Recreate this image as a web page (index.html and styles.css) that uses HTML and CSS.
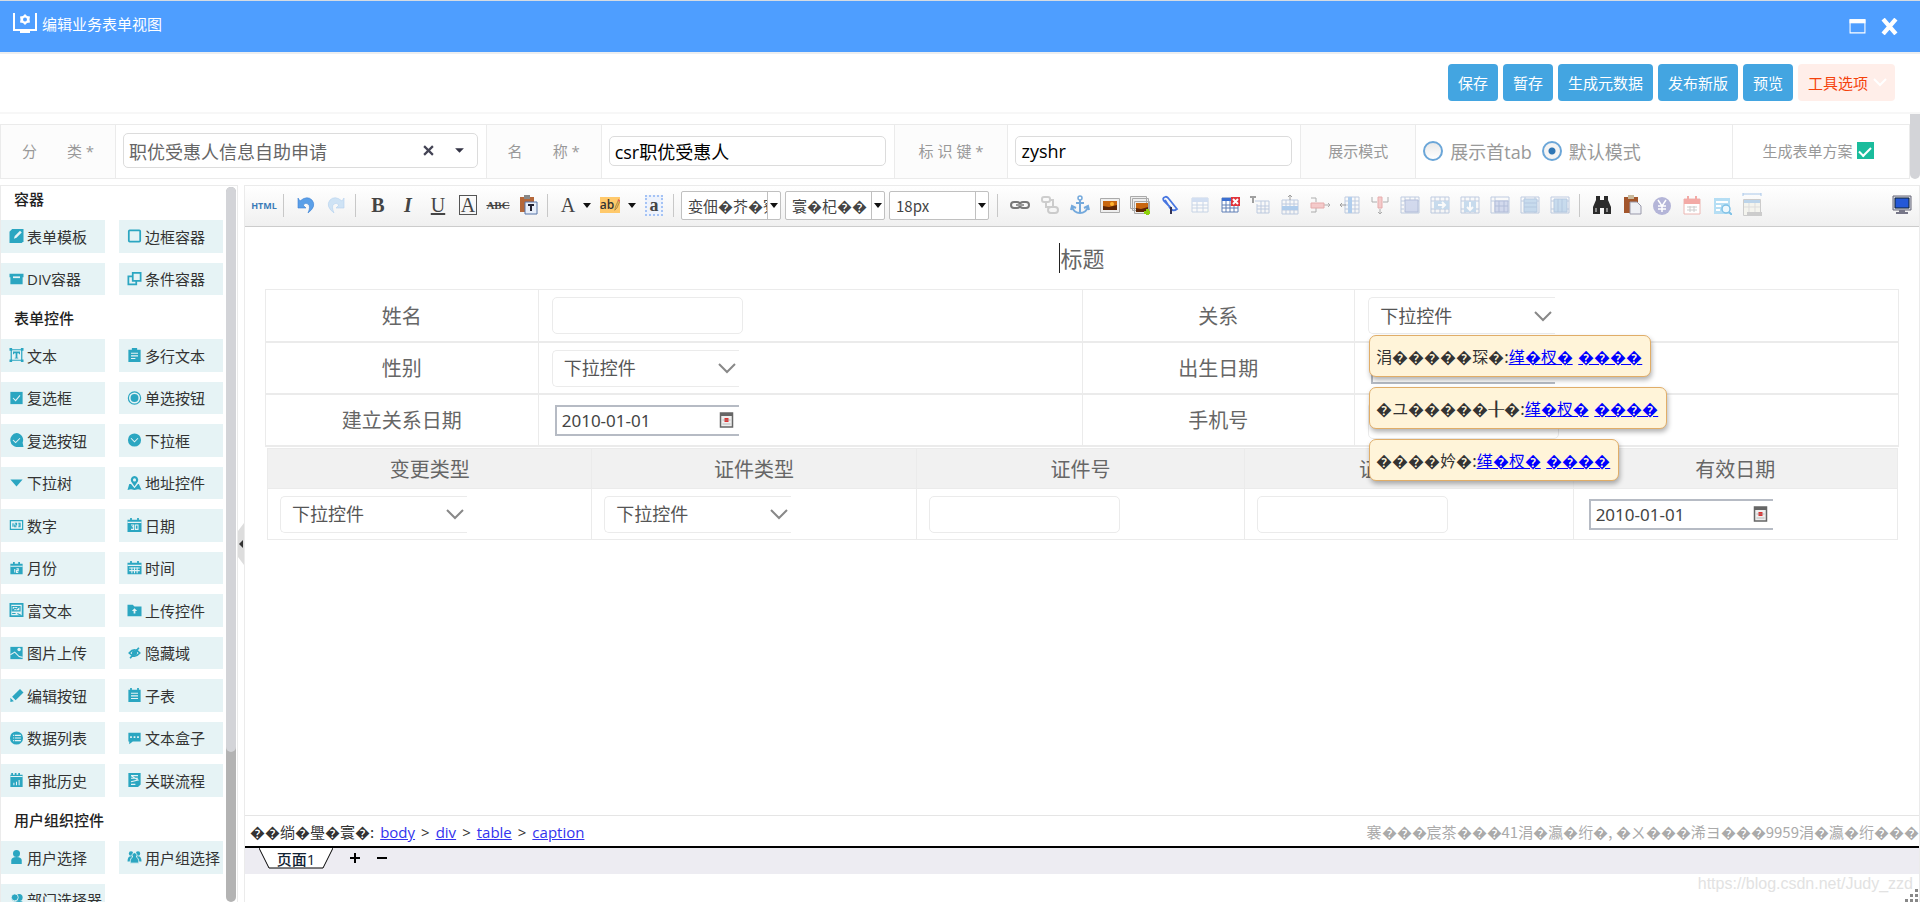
FILE: index.html
```html
<!DOCTYPE html>
<html lang="zh-CN">
<head>
<meta charset="utf-8">
<title>编辑业务表单视图</title>
<link rel="stylesheet" href="styles.css">
</head>
<body>
<header class="titlebar">
  <svg class="titlebar-icon" viewBox="0 0 26 22"><path d="M2 1v17h22V1" fill="none" stroke="#fff" stroke-width="2"/><path d="M8 19h10v2H8z" fill="#fff"/><path d="M13 2l2 2 3 .5-.5 3 .5 3-3 .5-2 2-2-2-3-.5.500-3-.5-3 3-.5z" fill="#fff"/><circle cx="13" cy="7.500" r="2" fill="#4e9eff"/></svg>
  <h1 class="titlebar-text">编辑业务表单视图</h1>
  <div class="window-buttons">
    <button class="window-button" aria-label="最大化"><svg viewBox="0 0 16 16"><path d="M1 2h14v12H1z" fill="none" stroke="#fff"/><path d="M.5 1h15v4H.5z" fill="#fff"/></svg></button>
    <button class="window-button" aria-label="关闭"><svg viewBox="0 0 16 16"><path d="M2 1l12 14M14 1L2 15" stroke="#fff" stroke-width="4"/></svg></button>
  </div>
</header>

<div class="actions">
  <button class="action">保存</button>
  <button class="action">暂存</button>
  <button class="action">生成元数据</button>
  <button class="action">发布新版</button>
  <button class="action">预览</button>
  <button class="action action-tools">工具选项 <svg viewBox="0 0 14 14"><path d="M1 4l6 6 6-6" fill="none" stroke="#fff" stroke-width="2"/></svg></button>
</div>

<section class="params">
  <div class="params-grid">
    <label class="param-label param-spread" for="category"><span>分</span><span>类 *</span></label>
    <div class="param-field">
      <div class="combo">
        <input id="category" class="combo-input" type="text" value="职优受惠人信息自助申请">
        <button class="combo-button" aria-label="清除"><svg viewBox="0 0 10 10"><path d="M1 1l8 8M9 1L1 9" stroke="#445" stroke-width="2"/></svg></button>
        <button class="combo-button" aria-label="展开"><svg viewBox="0 0 10 10"><path d="M1 3h8L5 7z" fill="#334"/></svg></button>
      </div>
    </div>
    <label class="param-label param-spread" for="name"><span>名</span><span>称 *</span></label>
    <div class="param-field"><input id="name" class="param-input" type="text" value="csr职优受惠人"></div>
    <label class="param-label param-key" for="key"><span>标</span><span>识</span><span>键 *</span></label>
    <div class="param-field"><input id="key" class="param-input" type="text" value="zyshr"></div>
    <div class="param-label">展示模式</div>
    <div class="param-field radios">
      <label class="radio-label"><input class="radio" type="radio" name="mode">展示首tab</label>
      <label class="radio-label"><input class="radio" type="radio" name="mode" checked>默认模式</label>
    </div>
    <label class="param-label param-check">生成表单方案<input class="check" type="checkbox" checked></label>
  </div>
  <div class="page-scroll"></div>
</section>

<main class="workspace">
  <aside class="sidebar">
    <div class="palette">
      <h2 class="palette-title">容器</h2>
      <div class="palette-grid">
        <button class="item"><svg viewBox="0 0 16 16"><path d="M3 0h13v14l-2 2H0V3z"/><path class="cut" d="M5 11l1-3 6-6 2 2-6 6z"/></svg>表单模板</button>
        <button class="item"><svg viewBox="0 0 16 16"><rect class="line" x="1.500" y="1.500" width="13" height="13" rx="1"/></svg>边框容器</button>
        <button class="item"><svg viewBox="0 0 16 16"><path d="M0 2h16v4H0zM1 6h14v8H1z"/><path class="cut" d="M4 5h8v2H4z"/></svg>DIV容器</button>
        <button class="item"><svg viewBox="0 0 16 16"><path class="line" d="M6 1h9v9H6zM5 5H1v9h9v-3"/></svg>条件容器</button>
      </div>
      <h2 class="palette-title">表单控件</h2>
      <div class="palette-grid">
        <button class="item"><svg viewBox="0 0 16 16"><path class="thin" d="M2 2h12v12H2z"/><path d="M0 0h3v3H0zM13 0h3v3h-3zM0 13h3v3H0zM13 13h3v3h-3zM4 4h8v3h-1l-.5-1H9v5h1v1H6v-1h1V6H5.500L5 7H4z"/></svg>文本</button>
        <button class="item"><svg viewBox="0 0 16 16"><path d="M1 2h4V0h6v2h4v14H1z"/><path class="cutline" d="M4 6h8M4 9h8M4 12h5"/></svg>多行文本</button>
        <button class="item"><svg viewBox="0 0 16 16"><path d="M1 1h14v14H1z"/><path class="cutline" d="M4 8l3 3 5-6"/></svg>复选框</button>
        <button class="item"><svg viewBox="0 0 16 16"><circle class="thin" cx="8" cy="8" r="7"/><circle cx="8" cy="8" r="4.500"/></svg>单选按钮</button>
        <button class="item"><svg viewBox="0 0 16 16"><path d="M8 0a8 8 0 0 1 7 11l1 5h-6A8 8 0 1 1 8 0z"/><path class="cutline" d="M4 8l3 3 5-5"/></svg>复选按钮</button>
        <button class="item"><svg viewBox="0 0 16 16"><circle cx="8" cy="8" r="7.500"/><path class="cutline" d="M4 6l4 4 4-4"/></svg>下拉框</button>
        <button class="item"><svg viewBox="0 0 16 16"><path d="M1 4h14l-7 8z"/></svg>下拉树</button>
        <button class="item"><svg viewBox="0 0 16 16"><path d="M8 0a4.500 4.500 0 0 1 4 6L8 12 4 6a4.500 4.500 0 0 1 4-6zM2 9h2l4 5 4-5h1l3 7-4-1-4 1-4-1-4 1z"/><circle class="cut" cx="8" cy="4.500" r="1.800"/></svg>地址控件</button>
        <button class="item"><svg viewBox="0 0 16 16"><path class="thin" d="M1 3h14v10H1zM4 6v4M6 6h2v2H6v2h2M10 6h2v4h-2M10 8h2"/></svg>数字</button>
        <button class="item"><svg viewBox="0 0 16 16"><path d="M0 2h3V0h2v2h6V0h2v2h3v14H0z"/><path class="cutline" d="M0 5h16M4 8h3v5H4M5 10h2M9 8h3v5H9z"/></svg>日期</button>
        <button class="item"><svg viewBox="0 0 16 16"><path d="M1 3h3V1h2v2h4V1h2v2h3v12H1z"/><path class="cutline" d="M1 6h14M6 9v4M8 9h2v2H8v2h2"/></svg>月份</button>
        <button class="item"><svg viewBox="0 0 16 16"><path d="M0 2h3V0h2v2h6V0h2v2h3v13H0z"/><path class="cutline" d="M0 5h16M2 8h12M2 11h12M5 7v7M8 7v7M11 7v7"/></svg>时间</button>
        <button class="item"><svg viewBox="0 0 16 16"><path class="line" d="M1 1h14v14H1z"/><path class="thin" d="M3 8V4h9v5H3zM4 8l2-2 2 1 3-3M3 12h4M9 12l4 2"/></svg>富文本</button>
        <button class="item"><svg viewBox="0 0 16 16"><path d="M0 2h6l2 2h8v11H0z"/><path class="cut" d="M8 6l3 3H9v3H7V9H5z"/></svg>上传控件</button>
        <button class="item"><svg viewBox="0 0 16 16"><path d="M1 1h14v14H1z"/><path class="cutline" d="M1 10l5-3 5 5 4 1"/><circle class="cut" cx="11" cy="4" r="2"/></svg>图片上传</button>
        <button class="item"><svg viewBox="0 0 16 16"><path class="line" d="M2 8q6-7 12 0-6 7-12 0zM3 14L13 2"/><circle cx="8" cy="8" r="3"/></svg>隐藏域</button>
        <button class="item"><svg viewBox="0 0 16 16"><path d="M12 1l4 4-9 9-4-4zM1 11l4 4-4 1z"/></svg>编辑按钮</button>
        <button class="item"><svg viewBox="0 0 16 16"><path d="M1 2h2V0h2v2h6V0h2v2h2v14H1z"/><path class="cutline" d="M4 6h8M4 9h8M4 12h8"/></svg>子表</button>
        <button class="item"><svg viewBox="0 0 16 16"><circle cx="8" cy="8" r="7.500"/><path class="cutline" d="M4 5h1M6 5h7M4 8h1M6 8h7M4 11h1M6 11h7"/></svg>数据列表</button>
        <button class="item"><svg viewBox="0 0 16 16"><path d="M1 2h14v10H6l-4 3v-3H1z"/><path class="cut" d="M3 6h2v2H3zM7 6h2v2H7zM11 6h2v2h-2z"/></svg>文本盒子</button>
        <button class="item"><svg viewBox="0 0 16 16"><path d="M1 2h1V0h2v2h2V0h2v2h2V0h2v2h3v14H1z"/><path class="cutline" d="M1 4h14M5 14v-3M8 14v-4M11 14V8"/></svg>审批历史</button>
        <button class="item"><svg viewBox="0 0 16 16"><path d="M1 0h14v13l-3 3H1z"/><path class="cutline" d="M4 3h8M4 6h8M4 3l8 5-8 2M4 13h5"/></svg>关联流程</button>
      </div>
      <h2 class="palette-title">用户组织控件</h2>
      <div class="palette-grid">
        <button class="item"><svg viewBox="0 0 16 16"><circle cx="8" cy="4" r="4"/><path d="M2 16v-4q0-4 6-4t6 4v4z"/></svg>用户选择</button>
        <button class="item"><svg viewBox="0 0 16 16"><circle cx="4" cy="4" r="2.500"/><circle cx="12" cy="4" r="2.500"/><path d="M0 13q0-6 4-6h8q4 0 4 6z"/><path class="halo" d="M8 3a3 3 0 0 1 2 5q3 1 3 7H3q0-6 3-7a3 3 0 0 1 2-5z"/></svg>用户组选择</button>
        <button class="item"><svg viewBox="0 0 16 16"><circle cx="11" cy="5" r="4"/><path d="M5 14q0-5 6-5t5 5z"/><circle class="halo" cx="6" cy="5" r="4"/><path d="M0 16q0-6 6-6t6 6z"/></svg>部门选择器</button>
      </div>
    </div>
    <div class="palette-scroll"><div class="palette-thumb"></div></div>
  </aside>
  <button class="collapse" aria-label="收起"><svg viewBox="0 0 6 42"><path d="M6 0v42L0 34V8z" fill="#ddd"/><path d="M5 17v8l-4-4z" fill="#333"/></svg></button>

  <section class="editor">
    <div class="tools">
      <button class="tool tool-html">HTML</button>
      <i class="tool-sep"></i>
      <button class="tool" aria-label="撤销"><svg viewBox="0 0 20 20"><path d="M2 3l2 3q7-6 12-1 5 6-4 13 3-7 0-9-2-2-5 1l3 3H2z" fill="#5a9fe8" stroke="#3c82d4" stroke-width=".6"/></svg></button>
      <button class="tool" aria-label="重做"><svg viewBox="0 0 20 20"><path d="M18 3l-2 3Q9 0 4 5q-5 6 4 13-3-7 0-9 2-2 5 1l-3 3h8z" fill="#cfe3f5" stroke="#b5d2ee" stroke-width=".6"/></svg></button>
      <i class="tool-sep"></i>
      <button class="tool tool-letter"><b>B</b></button>
      <button class="tool tool-letter"><b><em>I</em></b></button>
      <button class="tool tool-letter"><u>U</u></button>
      <button class="tool tool-letter"><span class="boxed">A</span></button>
      <button class="tool tool-abc"><s>ABC</s></button>
      <button class="tool" aria-label="粘贴文本"><svg viewBox="0 0 20 20"><path d="M2 2h14v15H2z" fill="#b5683a"/><path d="M6 0h6v4H6z" fill="#888"/><path d="M7 7h12v12H7z" fill="#e8effa" stroke="#5674a8"/><path d="M10 10h6M13 10v6" stroke="#223" stroke-width="2"/></svg></button>
      <i class="tool-sep"></i>
      <button class="tool tool-letter tool-drop">A<svg class="arrow" viewBox="0 0 8 8"><path d="M0 2h8L4 7z"/></svg></button>
      <button class="tool tool-drop" aria-label="背景色"><span class="marker">ab<svg viewBox="0 0 8 16"><path d="M1 15l1-5 4-9 2 2-4 9z" fill="#e9b54e" stroke="#6b5a3a" stroke-width=".6"/><path d="M5 2l1-2 2 2-1 2z" fill="#e8605a"/></svg></span><svg class="arrow" viewBox="0 0 8 8"><path d="M0 2h8L4 7z"/></svg></button>
      <button class="tool tool-letter"><span class="dotted">a</span></button>
      <i class="tool-sep"></i>
      <button class="picker"><span class="picker-text">娈佃�芥�寮</span><span class="picker-arrow"><svg class="arrow" viewBox="0 0 8 8"><path d="M0 2h8L4 7z"/></svg></span></button>
      <button class="picker"><span class="picker-text">寰�杞��</span><span class="picker-arrow"><svg class="arrow" viewBox="0 0 8 8"><path d="M0 2h8L4 7z"/></svg></span></button>
      <button class="picker"><span class="picker-text">18px</span><span class="picker-arrow"><svg class="arrow" viewBox="0 0 8 8"><path d="M0 2h8L4 7z"/></svg></span></button>
      <i class="tool-sep"></i>
      <button class="tool" aria-label="链接"><svg viewBox="0 0 20 20"><rect x="1" y="7" width="9" height="6" rx="3" fill="none" stroke="#777" stroke-width="2"/><rect x="10" y="7" width="9" height="6" rx="3" fill="none" stroke="#777" stroke-width="2"/><path d="M6 10h8" stroke="#999" stroke-width="2"/></svg></button>
      <button class="tool faded" aria-label="取消链接"><svg viewBox="0 0 20 20"><rect x="2" y="2" width="8" height="5" rx="2" fill="none" stroke="#999" stroke-width="2"/><path d="M6 7v5h4M10 5h3v6" fill="none" stroke="#999" stroke-width="2"/><rect x="8" y="12" width="10" height="6" rx="3" fill="none" stroke="#999" stroke-width="2"/></svg></button>
      <button class="tool" aria-label="锚点"><svg viewBox="0 0 20 20"><path d="M10 5v13M6 8h8M2 12q2 6 8 6t8-6M1 15l1-4 4 2M19 15l-1-4-4 2" fill="none" stroke="#74a9dc" stroke-width="2"/><circle cx="10" cy="3" r="2" fill="none" stroke="#74a9dc" stroke-width="1.500"/></svg></button>
      <button class="tool" aria-label="图片"><svg viewBox="0 0 20 20"><path d="M.5 3.500h19v14H.5z" fill="#eee" stroke="#aaa"/><path d="M3 6h14v9H3z" fill="#c8660f"/><path d="M3 11l6 1 8-2v5H3z" fill="#5c2505"/><circle cx="12" cy="9" r="2" fill="#ffb52e"/></svg></button>
      <button class="tool" aria-label="多图上传"><svg viewBox="0 0 20 20"><path d="M.5 1.500h16v12H.5zM2.500 3.500h16v12h-16zM4.500 6.500h15v12h-15z" fill="#eee" stroke="#aaa"/><path d="M6 8h12v9H6z" fill="#c8660f"/><path d="M6 13l5 1 7-2v5H6z" fill="#5c2505"/><path d="M14 16h2v-2h3v2h1v3h-1v1h-3v-1h-2z" fill="#8fd00c"/></svg></button>
      <button class="tool" aria-label="附件"><svg viewBox="0 0 20 20"><path d="M11 13L4 6q-2-3 1-4 2-1 4 2l8 10q-4 3-7-1L5 5" fill="none" stroke="#4876e0" stroke-width="1.800"/><path d="M11 12v7" stroke="#335" stroke-width="2"/></svg></button>
      <button class="tool faded" aria-label="插入表格"><svg viewBox="0 0 20 20"><path d="M2 3h16v14H2zM2 10h16M2 13h16M7 6v11M13 6v11" fill="#fff" stroke="#8eabd2"/><path d="M2 3h16v4H2z" fill="#a3bfe9"/></svg></button>
      <button class="tool" aria-label="删除表格"><svg viewBox="0 0 20 20"><path d="M2 3h16v14H2zM2 10h16M2 13h16M6 6v11M10 6v11M14 6v11" fill="#fff" stroke="#5e7fb5"/><path d="M2 3h9v3H2z" fill="#3c6fd1"/><path d="M11 2h9v9h-9z" fill="#e0343c"/><path d="M13 4l5 5M18 4l-5 5" stroke="#fff" stroke-width="2"/></svg></button>
      <button class="tool faded" aria-label="表前插入行"><svg viewBox="0 0 20 20"><path d="M0 2h6M3 2v6" stroke="#333" stroke-width="2"/><path d="M5 6h14v12H7V9M7 11h12M7 14h12M11 6v12M15 6v12" fill="none" stroke="#7895c4"/></svg></button>
      <button class="tool faded" aria-label="前插入行"><svg viewBox="0 0 20 20"><path d="M2 5h16v14H2zM2 9h16M2 15h16M6 5v14M10 5v14M14 5v14" fill="none" stroke="#7895c4"/><path d="M2 11h16v4H2z" fill="#5b9be0"/><path d="M10 5V0M8 2l2-2 2 2" fill="none" stroke="#333"/></svg></button>
      <button class="tool faded" aria-label="删除行"><svg viewBox="0 0 20 20"><path d="M1 3h5v4M1 17h5v-4M14 10h6M18 8l2 2-2 2" fill="none" stroke="#555"/><path d="M1 8h13v5H1z" fill="#f09494" stroke="#d05050"/></svg></button>
      <button class="tool faded" aria-label="前插入列"><svg viewBox="0 0 20 20"><path d="M5 2h14v16H5zM5 6h14M5 10h14M5 14h14M15 2v16" fill="none" stroke="#7895c4"/><path d="M8 2h4v16H8z" fill="#5b9be0"/><path d="M6 10H0M2 8l-2 2 2 2" fill="none" stroke="#333"/></svg></button>
      <button class="tool faded" aria-label="删除列"><svg viewBox="0 0 20 20"><path d="M2 2v5h5M18 2v5h-5M10 14v5M8 17l2 2 2-2" fill="none" stroke="#555"/><path d="M8 2h4v11H8z" fill="#f09494" stroke="#d05050"/></svg></button>
      <button class="tool faded" aria-label="合并单元格"><svg viewBox="0 0 20 20"><path d="M1 2h18v16H1zM1 6h18M1 10h3M1 14h3M5 2v4M10 2v4M15 2v4" fill="none" stroke="#7895c4"/><path d="M5 5h13v12H5z" fill="#a6b5e0" stroke="#6178b5"/></svg></button>
      <button class="tool faded" aria-label="右合并"><svg viewBox="0 0 20 20"><path d="M1 2h18v16H1zM1 6h18M1 14h18M5 2v16M10 2v16M15 2v16" fill="none" stroke="#7895c4"/><path d="M4 6h15v8H4z" fill="#8db8e0"/><path d="M8 10h7M12 7l3 3-3 3" fill="none" stroke="#fff" stroke-width="2"/></svg></button>
      <button class="tool faded" aria-label="下合并"><svg viewBox="0 0 20 20"><path d="M1 2h18v16H1zM1 6h18M1 14h18M5 2v16M10 2v16M15 2v16" fill="none" stroke="#7895c4"/><path d="M4 6h12v11H4z" fill="#8db8e0"/><path d="M10 7v8M7 12l3 3 3-3" fill="none" stroke="#fff" stroke-width="2"/></svg></button>
      <button class="tool faded" aria-label="拆分单元格"><svg viewBox="0 0 20 20"><path d="M1 2h18v16H1zM1 6h18M5 2v16" fill="none" stroke="#7895c4"/><path d="M5 6h13v11H5zM5 11h13M9 6v11M14 6v11" fill="#a6b5e0" stroke="#6178b5"/></svg></button>
      <button class="tool faded" aria-label="拆分成行"><svg viewBox="0 0 20 20"><path d="M1 2h18v16H1zM1 6h18M5 2v16M15 2v16" fill="none" stroke="#7895c4"/><path d="M4 4h13v13H4zM4 8h13M4 12h13" fill="#8db8e0" stroke="#6590c5"/></svg></button>
      <button class="tool faded" aria-label="拆分成列"><svg viewBox="0 0 20 20"><path d="M1 2h18v16H1zM1 6h18M1 14h18" fill="none" stroke="#7895c4"/><path d="M4 4h13v13H4zM8 4v13M12 4v13" fill="#8db8e0" stroke="#6590c5"/></svg></button>
      <i class="tool-sep"></i>
      <button class="tool" aria-label="查找替换"><svg viewBox="0 0 20 20"><path d="M4 1h4v4h4V1h4v4l3 7v7h-7v-6H8v6H1v-7l3-7z" fill="#2b2b2b"/><path d="M4 13v4M15 13v4" stroke="#888" stroke-width="2"/></svg></button>
      <button class="tool" aria-label="粘贴"><svg viewBox="0 0 20 20"><path d="M2 2h14v16H2z" fill="#a3562c"/><path d="M6 0h6v4H6z" fill="#c9b99c"/><path d="M8 7h7l4 4v8H8z" fill="#eef0f5" stroke="#99a"/></svg></button>
      <button class="tool" aria-label="货币"><svg viewBox="0 0 20 20"><circle cx="10" cy="11" r="9" fill="#b4b5d8"/><path d="M6 5l4 6 4-6M6 11h8M6 14h8M10 11v6" fill="none" stroke="#fff" stroke-width="1.500"/></svg></button>
      <button class="tool" aria-label="日历"><svg viewBox="0 0 20 20"><path d="M2 4h16v15H2z" fill="#fff" stroke="#ecb6b2"/><path d="M2 4h16v5H2zM5 1h2v4H5zM13 1h2v4h-2z" fill="#f3aaa6"/><path d="M5 12h10M5 15h10M8 11v6M12 11v6" stroke="#ccc"/></svg></button>
      <button class="tool" aria-label="查询"><svg viewBox="0 0 20 20"><path d="M2 3h16v16H2z" fill="#b5def4"/><path d="M4 7h12M4 11h5M4 15h4" stroke="#fff" stroke-width="2"/><circle cx="14" cy="14" r="4" fill="#eef8fd" stroke="#7fc1e6" stroke-width="1.500"/><path d="M17 17l3 3" stroke="#7fc1e6" stroke-width="2"/></svg></button>
      <button class="tool tool-page" aria-label="页面"><svg viewBox="0 0 20 24"><path d="M1 0v3M19 0v3M1 1h18" stroke="#aac8ea"/><path d="M1.500 6.500h17v16h-17z" fill="#f4f4ee" stroke="#ccc"/><path d="M2 7h16v3H2z" fill="#bcd4ea"/><path d="M2 14h16M7 10v12M13 10v12" stroke="#ddd"/><path d="M5 19h15v4H5z" fill="#ccc"/></svg></button>
      <button class="tool tool-screen" aria-label="全屏"><svg viewBox="0 0 20 20"><path d="M1 1h18v14H1z" fill="#d5d9e5" stroke="#667"/><path d="M3 3h14v10H3z" fill="#2458d8" stroke="#123"/><path d="M7 15h6v2h3v2H4v-2h3z" fill="#778"/></svg></button>
    </div>

    <div class="document">
      <table class="form-table">
        <caption class="form-caption"><span class="caret">标题</span></caption>
        <tr>
          <th class="form-label">姓名</th>
          <td class="form-cell"><div class="field"><input class="box" type="text" aria-label="姓名"></div></td>
          <th class="form-label">关系</th>
          <td class="form-cell"><div class="field"><div class="drop"><select class="drop-select" aria-label="关系"><option>下拉控件</option></select><svg viewBox="0 0 18 12"><path d="M1 2l8 8 8-8"/></svg></div>
            <div class="hint">涓�����琛�:<a href="#">缂�杈�</a> <a href="#">����</a></div></div></td>
        </tr>
        <tr>
          <th class="form-label">性别</th>
          <td class="form-cell"><div class="field"><div class="drop"><select class="drop-select" aria-label="性别"><option>下拉控件</option></select><svg viewBox="0 0 18 12"><path d="M1 2l8 8 8-8"/></svg></div></div></td>
          <th class="form-label">出生日期</th>
          <td class="form-cell"><div class="field"><div class="date"><input class="date-input" type="text" aria-label="出生日期"></div>
            <div class="hint">�ユ�����╂�:<a href="#">缂�杈�</a> <a href="#">����</a></div></div></td>
        </tr>
        <tr>
          <th class="form-label">建立关系日期</th>
          <td class="form-cell"><div class="field"><div class="date"><input class="date-input" type="text" value="2010-01-01" aria-label="建立关系日期"><svg viewBox="0 0 14 16"><path d="M1 1h12v14H1z" fill="#eee" stroke="#666" stroke-width="1.500"/><path d="M1 1h12v3H1z" fill="#666"/><path d="M5 6h4v4H5z" fill="#d33"/><path d="M3 12h8M3 8h8" stroke="#999" stroke-width=".6"/></svg></div></div></td>
          <th class="form-label">手机号</th>
          <td class="form-cell"><div class="field"><input class="box" type="text" aria-label="手机号">
            <div class="hint">����妗�:<a href="#">缂�杈�</a> <a href="#">����</a></div></div></td>
        </tr>
      </table>
      <table class="sub-table">
        <tr>
          <th class="sub-head sub-narrow">变更类型</th><th class="sub-head sub-narrow">证件类型</th><th class="sub-head">证件号</th><th class="sub-head">证件有效期</th><th class="sub-head sub-narrow">有效日期</th>
        </tr>
        <tr>
          <td class="form-cell"><div class="field"><div class="drop"><select class="drop-select" aria-label="变更类型"><option>下拉控件</option></select><svg viewBox="0 0 18 12"><path d="M1 2l8 8 8-8"/></svg></div></div></td>
          <td class="form-cell"><div class="field"><div class="drop"><select class="drop-select" aria-label="证件类型"><option>下拉控件</option></select><svg viewBox="0 0 18 12"><path d="M1 2l8 8 8-8"/></svg></div></div></td>
          <td class="form-cell"><div class="field"><input class="box" type="text" aria-label="证件号"></div></td>
          <td class="form-cell"><div class="field"><input class="box" type="text" aria-label="证件有效期"></div></td>
          <td class="form-cell"><div class="field"><div class="date"><input class="date-input" type="text" value="2010-01-01" aria-label="有效日期"><svg viewBox="0 0 14 16"><path d="M1 1h12v14H1z" fill="#eee" stroke="#666" stroke-width="1.500"/><path d="M1 1h12v3H1z" fill="#666"/><path d="M5 6h4v4H5z" fill="#d33"/><path d="M3 12h8M3 8h8" stroke="#999" stroke-width=".6"/></svg></div></div></td>
        </tr>
      </table>
    </div>

    <div class="status">
      <nav class="path"><span class="garbled">��绱�璺�寰�:</span><a href="#">body</a>&gt;<a href="#">div</a>&gt;<a href="#">table</a>&gt;<a href="#">caption</a></nav>
      <div class="count garbled">褰���宸茶���41涓�瀛�绗�, �ㄨ���浠ヨ���9959涓�瀛�绗���</div>
    </div>
    <div class="tabs">
      <button class="tab"><svg viewBox="0 0 74 21"><path d="M0 0h74L64 20H10z" fill="#fff"/><path d="M0 0l10 20h54L74 0" fill="none" stroke="#000"/></svg><span class="tab-text">页面1</span></button>
      <button class="tab-tool" aria-label="增加页"><svg viewBox="0 0 12 12"><path d="M1 6h10M6 1v10" stroke="#000" stroke-width="2"/></svg></button>
      <button class="tab-tool" aria-label="删除页"><svg viewBox="0 0 12 12"><path d="M1 6h10" stroke="#000" stroke-width="2"/></svg></button>
    </div>
    <footer class="footer"><span class="watermark">https://blog.csdn.net/Judy_zzd</span><svg class="grip" viewBox="0 0 14 14"><path d="M10 1h3v3h-3zM5 6h3v3H5zM10 6h3v3h-3zM0 11h3v3H0zM5 11h3v3H5zM10 11h3v3h-3z" fill="#888"/></svg></footer>
  </section>
</main>
</body>
</html>
```
FILE: styles.css
```css
* { box-sizing: border-box; }

body {
  margin: 0;
  height: 100vh;
  overflow: hidden;
  display: flex;
  flex-direction: column;
  background: #fff;
  color: #333;
  font-family: "Open Sans", "Noto Sans CJK SC", sans-serif;
  font-size: 15px;
}

button, input, select { font: inherit; color: inherit; margin: 0; }
button { border: 0; background: none; padding: 0; white-space: nowrap; }
svg { display: block; flex: none; }

/* Title bar */
.titlebar {
  flex: none;
  display: flex;
  height: 54px;
  padding: 10px 22px 0 12px;
  gap: 4px;
  background: #4e9eff;
  border-top: 1px solid #d5dbe2;
  border-bottom: 2px solid #eceef0;
  color: #fff;
}
.titlebar-icon { width: 26px; height: 24px; }
.titlebar-text { margin: 0; font-size: 15px; line-height: 26px; font-weight: 400; }
.window-buttons { margin: 7px 0 0 auto; display: flex; gap: 15px; align-items: flex-start; }
.window-button { width: 17px; }
.window-button svg { width: 17px; height: 17px; }

/* Action buttons */
.actions {
  flex: none;
  display: flex;
  justify-content: flex-end;
  gap: 5px;
  height: 58px;
  padding: 10px 25px 0 0;
}
.action {
  height: 37px;
  padding: 0 10px 1px;
  border-radius: 4px;
  background: #43a5e1;
  color: #fff;
  display: flex;
  align-items: center;
}
.action-tools { background: #ffeee9; color: #f4420c; gap: 5px; padding-right: 8px; }
.action-tools svg { width: 14px; height: 14px; }

/* Form parameters */
.params { flex: none; display: flex; border-top: 2px solid #f7f7f7; height: 67px; }
.params-grid {
  flex: 1;
  margin-top: 10px;
  display: grid;
  grid-template-columns: 115fr 371fr 115fr 293fr 114fr 293fr 115fr 317fr 176fr;
  border: 1px solid #ebebeb;
  color: #999;
}
.param-label {
  display: flex;
  align-items: center;
  justify-content: center;
  padding-bottom: 2px;
  background: #fcfcfc;
  border-right: 1px solid #ebebeb;
}
.param-spread { gap: 30px; }
.param-key { gap: 4px; }
.param-field { display: flex; align-items: center; padding: 0 8px 2px 7px; border-right: 1px solid #ebebeb; min-width: 0; font-size: 18px; }
.combo { display: flex; align-items: center; flex: 1; height: 35px; border: 1px solid #dcdcdc; border-radius: 5px; padding: 0 11px 0 5px; gap: 19px; }
.combo-input { flex: 1; min-width: 0; border: 0; padding: 0; background: none; color: #666; }
.combo-button { width: 12px; }
.combo-button svg { width: 11px; height: 11px; }
.param-input { width: 100%; height: 30px; border: 1px solid #dcdcdc; border-radius: 5px; padding: 0 5px; color: #000; }
.radios { gap: 10px; }
.radio-label { display: flex; align-items: center; gap: 7px; }
.radio {
  appearance: none;
  width: 20px;
  height: 20px;
  border: 2px solid #6ba6d8;
  border-radius: 50%;
  background: linear-gradient(#e9e9e9, #fff);
}
.radio:checked { background: radial-gradient(circle, #2f76b5 0 3px, #f4f4f4 4px); }
.param-check { background: #fff; border-right: 0; gap: 4px; padding-right: 6px; }
.check {
  appearance: none;
  width: 17px;
  height: 17px;
  background: #1abc9c;
  display: grid;
  place-items: center;
}
.check::before { content: ""; width: 10px; height: 5px; border: solid #fff; border-width: 0 0 2px 2px; transform: rotate(-45deg); }
.page-scroll { width: 10px; background: #d3d4d8; border-radius: 0 0 5px 5px; }

/* Workspace */
.workspace { flex: 1; min-height: 0; display: flex; margin-top: 6px; }
.sidebar { flex: none; display: flex; width: 238px; border: 1px solid #ebebeb; border-bottom: 0; overflow: hidden; }
.palette { flex: 1; height: 0; }
.palette-title { margin: 0; padding: 11px 0 9px 13px; font-size: 15px; line-height: 24px; font-weight: 500; color: #222; }
.palette-title:first-child { padding-top: 1px; }
.palette-grid {
  display: grid;
  grid-template-columns: 104px 104px;
  grid-auto-rows: 33px 32px;
  gap: 10px 14px;
}
.item { display: flex; align-items: center; gap: 3px; padding: 0 8px 1px; background: #e6f3f5; color: #333; }
.item svg { width: 15px; height: 14px; fill: #2ba6c1; }
.item .line { fill: none; stroke: #2ba6c1; stroke-width: 2; }
.item .thin { fill: none; stroke: #2ba6c1; stroke-width: 1.4; }
.item .cut { fill: #e6f3f5; }
.item .cutline { fill: none; stroke: #e6f3f5; stroke-width: 1.2; }
.item .halo { stroke: #e6f3f5; }
.palette-scroll { width: 10px; margin: 1px 1px 0 0; background: #b3b3b3; border-radius: 5px; }
.palette-thumb { height: 79%; background: #d3d4d8; border-radius: 5px; }
.collapse { flex: none; width: 6px; }
.collapse svg { width: 6px; height: 42px; }

/* Editor */
.editor { flex: 1; min-width: 0; display: flex; flex-direction: column; border: 1px solid #ebebeb; border-bottom: 0; }
.tools {
  flex: none;
  display: flex;
  align-items: center;
  height: 41px;
  padding: 0 2px 2px 4px;
  background: linear-gradient(#fff, #f0f0f0);
  border-bottom: 1px solid #ccc;
  color: #444;
}
.tool { flex: none; width: 30px; height: 30px; display: flex; align-items: center; justify-content: center; }
.tool svg { width: 20px; height: 20px; }
.tool-html { font: 700 9px "Open Sans", sans-serif; color: #3b7cb8; }
.tool-letter { font: 20px "Liberation Serif", serif; color: #444; }
.tool-abc { font: 700 11px "Liberation Serif", serif; }
.tool-drop { width: 42px; gap: 8px; }
.tool .arrow, .arrow { width: 8px; height: 8px; fill: #111; }
.boxed { border: 1px solid #555; padding: 0 1px; line-height: 18px; }
.marker { display: flex; background: #ffc96b; font-size: 12px; line-height: 15px; font-weight: 600; color: #333; }
.marker svg { width: 6px; height: 16px; }
.dotted { border: 2px dotted #a5c3f5; width: 18px; line-height: 17px; font-weight: 700; background: #eef3fc; font-size: 18px; }
.faded { opacity: .45; }
.tool-sep { flex: none; width: 1px; height: 23px; margin: 0 7px 0 4px; background: #c8c8c8; }
.tool-page svg { height: 24px; }
.picker {
  flex: none;
  display: flex;
  width: 100px;
  height: 29px;
  margin-right: 4px;
  padding-left: 6px;
  background: #fff;
  border: 1px solid #c0c0c0;
  border-radius: 2px;
  font-family: "Noto Sans CJK SC", sans-serif;
  text-align: left;
}
.picker-text { flex: 1; min-width: 0; overflow: hidden; line-height: 27px; }
.picker-arrow { width: 13px; border-left: 1px solid #c0c0c0; display: grid; place-items: center; }
.tool-screen { margin-left: auto; }

/* Document */
.document { flex: 1; min-height: 0; padding: 0 20px; color: #666; }
.form-table, .sub-table { border-collapse: collapse; table-layout: fixed; width: 100%; font-size: 20px; }
.form-caption { height: 62px; font-size: 22px; line-height: 62px; }
.caret { border-left: 1px solid #222; }
.form-label, .sub-head { padding: 0; font-weight: 400; text-align: center; border: 1px solid #ebebeb; }
.form-table .form-label, .form-table .form-cell { height: 52px; border-bottom: 2px solid #ebebeb; }
.form-label { width: 16.7%; }
.form-cell { height: 51px; padding: 1px 12px 0; border: 1px solid #ebebeb; }
.form-table .form-cell { padding-left: 13px; }
.field { position: relative; display: flex; align-items: center; height: 38px; }
.sub-table { width: calc(100% - 3px); margin: 1px 1px 0 2px; }
.sub-head { height: 40px; background: #f1f1f1; }
.sub-narrow { width: 19.9%; }
.box { width: 191px; height: 37px; border: 1px solid #ebebeb; border-radius: 5px; background: #fff; }
.drop { display: flex; align-items: center; width: 187px; height: 37px; border: 1px solid #ebebeb; border-right: 0; border-radius: 5px 0 0 5px; padding-right: 3px; }
.drop-select { flex: 1; min-width: 0; appearance: none; border: 0; background: none; padding: 0 0 0 11px; font-size: 18px; line-height: 30px; color: #555; }
.drop svg { width: 18px; height: 12px; fill: none; stroke: #888; stroke-width: 2; }
.date { display: flex; align-items: center; width: 184px; height: 31px; margin-left: 3px; border: 2px solid #b6bbc4; border-right: 0; padding-right: 5px; }
.date-input { flex: 1; min-width: 0; border: 0; padding: 0 0 0 5px; background: none; font-family: "Noto Sans", sans-serif; font-size: 17px; color: #444; }
.date svg { width: 15px; height: 16px; }
.hint {
  position: absolute;
  top: 100%;
  left: 1px;
  z-index: 1;
  height: 42px;
  padding: 0 8px 0 6px;
  line-height: 40px;
  font-family: "Noto Sans CJK SC", sans-serif;
  font-size: 16px;
  white-space: nowrap;
  color: #333;
  background: #fff4d9;
  border: 1px solid #e0ad68;
  border-radius: 7px;
  box-shadow: 1px 3px 5px rgba(0, 0, 0, .3);
}
.hint a + a { margin-left: 2px; }
a { color: #00f; }

/* Status and page tabs */
.status { flex: none; display: flex; justify-content: space-between; height: 31px; padding-left: 5px; border-top: 1px solid #e5e5e5; line-height: 32px; }
.path { display: flex; gap: 6px; }
.path a { color: #33e; }
.garbled { font-family: "Noto Sans CJK SC", sans-serif; }
.count { color: #aaa; white-space: nowrap; }
.tabs { flex: none; display: flex; height: 28px; padding-left: 14px; background: #edecf2; border-top: 2px solid #000; }
.tab { position: relative; width: 74px; height: 21px; }
.tab svg { position: absolute; inset: 0; width: 74px; height: 21px; }
.tab-text { position: relative; display: block; line-height: 18px; font-weight: 500; color: #123; }
.tab-tool { width: 27px; height: 20px; }
.tab + .tab-tool { margin-left: 8px; }
.tab-tool svg { width: 12px; height: 12px; margin: 0 auto; }
.footer { flex: none; display: flex; justify-content: flex-end; align-items: flex-end; height: 28px; }
.watermark { font: 16px/36px "Liberation Sans", sans-serif; height: 36px; color: #e2e2e2; margin-right: -8px; }
.grip { width: 14px; height: 14px; }
```
